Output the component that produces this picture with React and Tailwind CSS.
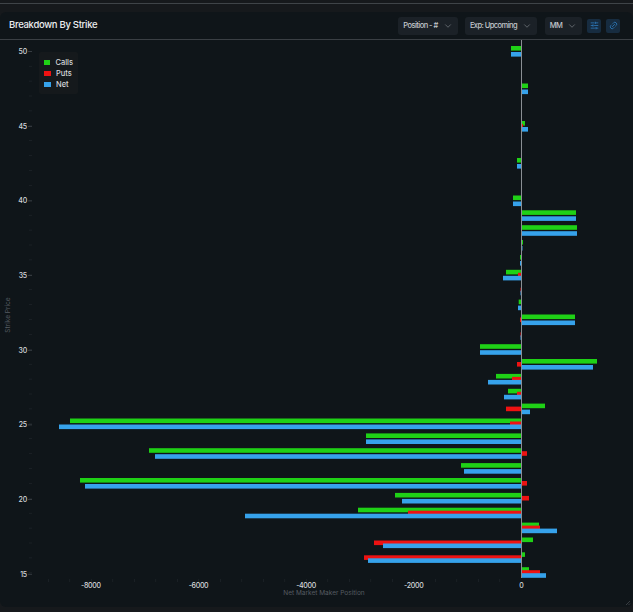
import { ChevronDown, SlidersHorizontal, Link2 } from 'lucide-react'

const GREEN = '#1fd116'
const RED = '#ee1212'
const BLUE = '#36a2eb'

const ZERO_X = 521.3

// [y of the strike, left/right end of calls, puts, net] in pixels, null = no bar
const ROWS = [
  [51, 511, null, 511],
  [88.5, 528, null, 528],
  [126, 525, 523, 528],
  [163, 517, null, 517],
  [200.5, 513, null, 513],
  [215.3, 576, null, 576],
  [230.2, 577, null, 577],
  [245, 523, null, 522.5],
  [260, 520, null, 520],
  [274.8, 506, 518, 503],
  [289.7, null, 520.5, 520.5],
  [304.6, 518.7, null, 518],
  [319.5, 575, 520, 575],
  [334.3, null, 520.5, 520.5],
  [349.2, 480, null, 480],
  [364, 597, 517, 593],
  [378.9, 496, 512, 488],
  [393.8, 508, 517, 504],
  [408.6, 545, 506, 530],
  [423.5, 70, 510, 59],
  [438.4, 366, null, 366],
  [453.2, 149, 527, 155],
  [468.1, 461, 522, 464],
  [483, 80, 527, 85],
  [497.9, 395, 529, 402],
  [512.7, 358, 408, 245],
  [527.6, 539, 540, 557],
  [542.5, 533, 374, 383],
  [557.3, 525, 364, 368],
  [572.2, 529, 540, 546],
]

const Y_TICKS = [50, 45, 40, 35, 30, 25, 20, 15]
const X_TICKS = [-8000, -6000, -4000, -2000, 0]

function Bar({ end, y, color }) {
  if (end == null) return null
  const x = Math.min(end, ZERO_X)
  return <rect x={x} y={y} width={Math.abs(end - ZERO_X)} height={4.6} fill={color} />
}

function Dropdown({ label, width }) {
  return (
    <button className={`${width} h-[18px] flex items-center justify-center gap-[5px] rounded-[3px] bg-[#1b2127] text-[7.5px] font-medium tracking-[-0.55px] text-[#c3c7cc]`}>
      <span>{label}</span>
      <ChevronDown size={10} strokeWidth={1.25} className="text-[#9aa0a6]" />
    </button>
  )
}

function Chart() {
  return (
    <svg viewBox="0 40 633 567" className="block w-[633px] h-[567px]" style={{ fontFamily: 'Inter, sans-serif' }}>
      {/* minor ticks */}
      {Array.from({ length: 36 }, (_, i) => (
        <rect key={i} x="29" y={51 + i * 14.9} width="3" height="0.6" fill="#22282d" />
      ))}
      {Array.from({ length: 22 }, (_, i) => (
        <rect key={i} x={48 + i * 21.5} y="579" width="0.6" height="3" fill="#22282d" />
      ))}

      {ROWS.map(([y, calls, puts, net]) => (
        <g key={y}>
          <Bar end={calls} y={y - 5} color={GREEN} />
          <Bar end={puts} y={y - 2} color={RED} />
          <Bar end={net} y={y + 1} color={BLUE} />
        </g>
      ))}

      <rect x="521" y="40" width="1" height="538" fill="#8a8f94" />

      {Y_TICKS.map((t) => {
        const y = 51.3 + (50 - t) * 14.93
        return (
          <g key={t}>
            <text x="27" y={y + 2.8} textAnchor="end" fontSize="7" fontWeight="500" letterSpacing="-0.2" fill="#d5d8db">{t}</text>
            <rect x="28" y={y} width="4" height="0.7" fill="#454b51" />
          </g>
        )
      })}
      {X_TICKS.map((t) => (
        <text key={t} x={ZERO_X + t * 0.0538} y="588" textAnchor="middle" fontSize="7" fontWeight="500" letterSpacing="-0.3" fill="#d5d8db">{t}</text>
      ))}

      <text x="324" y="595" textAnchor="middle" fontSize="6.5" fill="#565c62">Net Market Maker Position</text>
      <text x="0" y="0" transform="translate(10 315) rotate(-90)" textAnchor="middle" fontSize="6.5" fill="#565c62">Strike Price</text>
    </svg>
  )
}

export default function App() {
  return (
    <div className="w-[633px] h-[612px] overflow-hidden bg-[#16191c] pt-[3px]" style={{ fontFamily: 'Inter, sans-serif' }}>
      <div className="h-px bg-[#3f4448] mb-[8px]" />
      <div className="relative h-[595px] rounded-md bg-[#0f1519] flex flex-col overflow-hidden">
        <header className="h-[28px] pl-[9px] pr-[13px] flex items-center justify-between border-b border-[#3a3f44]">
          <h1 className="text-[9.5px] font-medium tracking-[-0.3px] text-[#eceef0]">Breakdown By Strike</h1>
          <div className="flex items-center">
            <Dropdown label="Position - #" width="w-[60px]" />
            <div className="w-[7px]" />
            <Dropdown label="Exp: Upcoming" width="w-[72px]" />
            <div className="w-[8px]" />
            <Dropdown label="MM" width="w-[37px]" />
            <button className="ml-[5px] w-[14px] h-[14px] rounded-[2px] bg-[#172c40] flex items-center justify-center text-[#2f7fc4]">
              <SlidersHorizontal size={9} />
            </button>
            <button className="ml-[5px] w-[14px] h-[14px] rounded-[2px] bg-[#172c40] flex items-center justify-center text-[#2f7fc4]">
              <Link2 size={9} className="-rotate-45" />
            </button>
          </div>
        </header>
        <div className="relative">
          <Chart />
          <div className="absolute left-[39px] top-[12px] w-[39px] h-[42px] bg-[#15191c] rounded-[2px] px-[5px] py-[6px] flex flex-col gap-[2px] text-[7.5px] font-medium leading-[9px] text-[#d5d8db]">
            <div className="flex items-center gap-[5px]"><span className="w-[7px] h-[5px] bg-[#1fd116]" />Calls</div>
            <div className="flex items-center gap-[5px]"><span className="w-[7px] h-[5px] bg-[#ee1212]" />Puts</div>
            <div className="flex items-center gap-[5px]"><span className="w-[7px] h-[5px] bg-[#36a2eb]" />Net</div>
          </div>
        </div>
        {/* resize handle */}
        <svg viewBox="0 0 6 6" className="absolute right-[2px] bottom-[1px] w-[6px] h-[6px]">
          <path d="M1 5 L5 1 M3.5 5 L5 3.5" stroke="#4a4f54" strokeWidth="0.7" />
        </svg>
      </div>
    </div>
  )
}
